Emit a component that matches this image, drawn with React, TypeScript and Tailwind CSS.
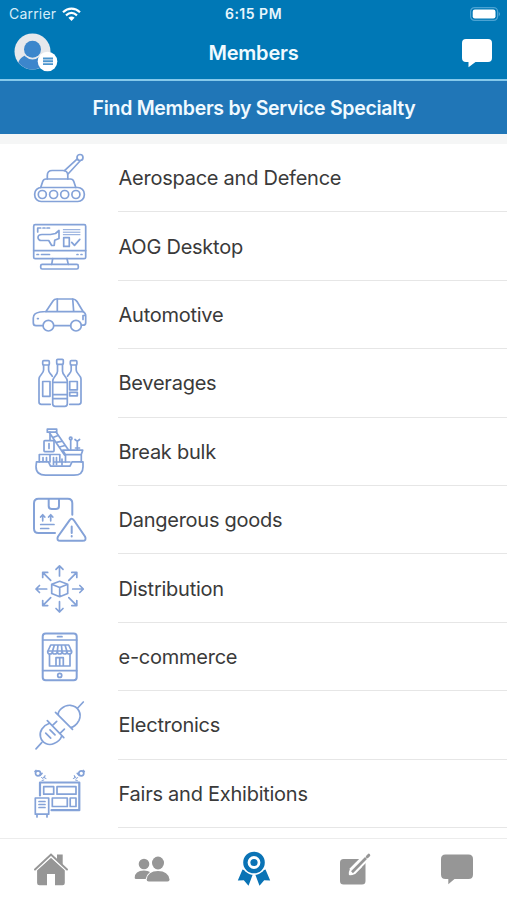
import type { ReactNode } from 'react';

const TankIcon = () => (
  <>
    <circle cx="50" cy="9.5" r="3" />
    <path d="M47.3 10.8 34.5 22.6M50 13 38 26" />
    <path d="M17.3 31v-3.5q0-5 5-5h10.5q5 0 5 5V31" />
    <path d="M10.7 39.5l2-6q.8-2.5 3.3-2.5h24.5q2.500 0 3.3 2.500l2 6" />
    <rect x="4.700" y="39.500" width="49.600" height="14" rx="6.500" />
    <circle cx="12.300" cy="46.500" r="4" />
    <circle cx="23.600" cy="46.500" r="4" />
    <circle cx="34.700" cy="46.500" r="4" />
    <circle cx="45.900" cy="46.500" r="4" />
  </>
);

const DesktopIcon = () => (
  <>
    <rect x="3.700" y="7.700" width="52" height="34" rx="1.500" />
    <path d="M3.700 33.600h52M22.700 41.700l-1 5.700M37 41.700l1.300 5.700" />
    <rect x="10.700" y="47.400" width="37.600" height="4.600" rx="1.500" />
    <path d="M7.700 15v-4h3M13 11h2M17 11h2.500M7 37.500h1.500M11.500 37.500h8M47 37.500h1M51 37.500h1" />
    <path d="M8 20.500c0-2 2-3 4-3h8.500l5-1 3.500-3v8l-4.300 1.800-.5 5.200h-2.500l-3-5H11c-1.500 0-3-1.500-3-3z" />
    <path d="M33.300 12.700H50M33.300 15.200H50M33.300 17.700H50" strokeWidth="1" />
    <path d="M33.700 20.700h5.600v8.700h-5.600zM41.700 25.400l2.800 3 5.300-6" />
  </>
);

const CarIcon = () => (
  <>
    <path d="M13 40.700H6q-2.700 0-2.700-3V33c0-4 2.500-5 6.700-6l6-.5 7-10.500q1.300-2 3.500-2H42q3.500 0 5 2.500l6 10q2.700 1.500 2.700 4.500v6.700q0 2.500-2.700 2.500h-1.500M24 40.700h16.500" />
    <path d="M16 26.700h37M27.300 14v12.700M42.700 14l1 12.700M55 30.500h-2v4M7.500 33.600h.8" />
    <circle cx="18.400" cy="40.700" r="5.300" />
    <circle cx="46" cy="40.700" r="5.300" />
  </>
);

const BottlesIcon = () => (
  <>
    <rect x="26.700" y="6.300" width="6.600" height="5" rx="1" />
    <path d="M27.500 11.300v7c0 4-4.800 5.500-4.800 10v22.500q0 2.500 2.500 2.500h9.600q2.500 0 2.500-2.500V28.300c0-4.500-4.800-6-4.800-10v-7M22.700 29.300h14.600M22.700 41.700h14.600M22.700 45.600h14.600" />
    <rect x="12.700" y="7.700" width="6.600" height="4.300" rx="1" />
    <path d="M13.600 12v5c0 4-4.600 5-4.600 9v23q0 2.300 2.300 2.300h9M18.600 12v5c0 3 2.500 4 3.700 6.300M12.700 28.500H20v14.800h-7.300z" />
    <rect x="40.300" y="7.700" width="6.600" height="4.300" rx="1" />
    <path d="M41.200 12v5c0 3-2.500 4-3.700 6.300M46.200 12v5c0 4 4.800 5 4.800 9v23q0 2.300-2.300 2.300h-9M39.700 28.500h7.600v8.300h-7.600zM39.700 39.300h7.600v3.500h-7.600z" />
  </>
);

const ShipIcon = () => (
  <>
    <path d="M6.500 39.900h12l2 4.300h19.500l2-4.300H53v5q0 8.300-9 8.300H15.500Q6 53.200 6 44.500z" />
    <path d="M32.700 28.200h20l-1.500 4.500H35.500zM35.500 32.700v7.200M51.300 32.700v7.200M17.300 7.200h9.400v3h-9.400z" />
    <path d="M19.300 10.500 34.500 33M26 10l12.500 18M23 15.500l5-2M26.300 20.300l5-1M29.500 25l5.500-1.500M20 10.200v8" />
    <rect x="14" y="18.700" width="10" height="10.900" rx=".8" />
    <path d="M19 21.500v5M9.300 39.900v-7.400h20.500v7.400M20 32.500v7.400M13 35.500v4M16.500 35.500v4M23.500 35.500v7M26.500 35.500v7M32 37v6M24 40h16" />
    <circle cx="40.700" cy="16.500" r="1.300" />
    <path d="M40.700 17.800v10M45 17.500l2.300 1.800 2.300-1.800M47.300 19v9M45.500 26h4" />
  </>
);

const DangerIcon = () => (
  <>
    <path d="M25 43.100H8.500Q4 43.100 4 38.600V13.300q0-4.500 4.500-4.500h29.300q4.500 0 4.500 4.500v11.500M18.700 8.800v7.300q0 3 3 3H26q3 0 3-3V8.800" strokeWidth="2" />
    <path d="M12.700 30.800v-6M10.600 27l2.100-2.300 2.100 2.300M20.700 30.800v-6M18.600 27l2.100-2.300 2.100 2.300M10.700 34.500H24M10.700 38.500h8" />
    <path d="M39.500 30.300q2.200-2.900 4.400 0L55 46.500q2 4.200-2.500 4.300H30.500q-4.500-.1-2.500-4.300zM41.700 36.500V43M41.700 46v.6" strokeWidth="2" />
  </>
);

const DistributionIcon = () => (
  <>
    <path d="M21.700 25.300l8-3 8 3v9.200l-8 3.200-8-3.200zM21.700 25.300l8 3.200 8-3.200M29.700 28.500v9.200" />
    <path d="M29.500 17V6.800M26 10.300l3.500-3.500 3.500 3.500M29.500 42.700V53M26 49.500l3.500 3.500 3.500-3.500M16.700 30H6M9.500 26.500 6 30l3.500 3.500M42.700 30h10.600M49.800 26.500l3.500 3.500-3.500 3.500" />
    <path d="M20.700 21.400l-8-8M12.700 18.400v-5h5M38.800 21.400l8-8M46.800 18.400v-5h-5M20.700 38.600l-8 8M12.700 41.600v5h5M38.800 38.600l8 8M46.800 41.600v5h-5" />
  </>
);

const ShopIcon = () => (
  <>
    <rect x="12.700" y="6.500" width="34" height="46.800" rx="3" strokeWidth="2" />
    <path d="M12.700 13h34M12.700 43.700h34M27.500 9.700H32" />
    <circle cx="29.700" cy="48.400" r="2" />
    <path d="M20.700 18h18l3 6.500q0 2.500-2.400 2.500T37 24.500q0 2.500-2.400 2.500t-2.500-2.500q0 2.500-2.400 2.500t-2.400-2.500q0 2.500-2.500 2.500t-2.400-2.500q0 2.500-2.400 2.500t-2.300-2.500zM22.400 24.500l2-6.500M27.300 24.500l.7-6.500M32.100 24.500l-.7-6.500M37 24.500 35 18M17.700 24h24" />
    <path d="M19.500 27v12h20.500V27M26 39v-8.300h7.300V39M29.700 31v8" />
  </>
);

const PlugIcon = () => (
  <>
    <path d="M25.500 17.300l17 17M28.500 20.300c-1.500-4 5-10.500 12-10 8 1 11.500 8.500 8.500 15-2 4-6 7.500-8.500 7M47.700 13l5.600-6" />
    <path d="M17.300 25.600l16.500 17M19 28.500c-6 2-10 8-8.500 13.500 1.500 6 8 9.200 13.500 6.500 3.500-1.500 6.500-4 7.500-7M11.700 47.700 6 53.800M22.300 30.600l4.400-4.200M30 38.300l4.400-4.200M15.700 38.200l5 5M20 34.800l5 5" />
  </>
);

const BoothIcon = () => (
  <>
    <path d="M10 31.500v-13h39.300v27.700H21.500" strokeWidth="2.200" />
    <path d="M13.700 22.700h10v7.500h-10zM27 22.700h19v7.500H27zM22.300 34h15v8.500h-15zM40.200 34H46v8.500h-5.800z" />
    <path d="M5.300 34h13.400v16.200H5.300zM7 50.200V53M17 50.200V53M9 37.500h6M9 40.500h6M9 43.500h6" />
    <circle cx="8" cy="9.300" r="2.500" />
    <circle cx="51.300" cy="9.300" r="2.500" />
    <path d="M5 7.500l1-1M10 11.300l2-2M54.300 7.500l-1-1M49.300 11.300l-2-2" />
    <path d="M11.500 13.500l1.500 1 1.200-2M15 11.500l-.5 2.500 1.500.5M12 16.500l1.800-.5M47.800 13.500l-1.500 1-1.200-2M44.300 11.500l.5 2.500-1.500.5M47.300 16.500l-1.800-.5" strokeWidth="1" />
  </>
);

const specialties: { name: string; icon: ReactNode }[] = [
  { name: 'Aerospace and Defence', icon: <TankIcon /> },
  { name: 'AOG Desktop', icon: <DesktopIcon /> },
  { name: 'Automotive', icon: <CarIcon /> },
  { name: 'Beverages', icon: <BottlesIcon /> },
  { name: 'Break bulk', icon: <ShipIcon /> },
  { name: 'Dangerous goods', icon: <DangerIcon /> },
  { name: 'Distribution', icon: <DistributionIcon /> },
  { name: 'e-commerce', icon: <ShopIcon /> },
  { name: 'Electronics', icon: <PlugIcon /> },
  { name: 'Fairs and Exhibitions', icon: <BoothIcon /> },
];

function StatusBar() {
  return (
    <div className="grid h-[27px] grid-cols-3 items-center pl-[9px] pr-[9px] text-[14px] leading-none">
      <div className="flex items-center gap-[6px] text-[#d5edf9]">
        <span className="tracking-[0.2px]">Carrier</span>
        <svg width="19" height="14" viewBox="0 0 19 14" fill="none" stroke="#fff" strokeWidth="2.200">
          <path d="M1 5.200c5-4.700 12-4.700 17 0M4 8.400c3.400-3 7.600-3 11 0" />
          <path d="M6.400 10.700q3.100-2.300 6.200 0L9.500 13.900z" fill="#fff" stroke="none" />
        </svg>
      </div>
      <span className="text-center font-semibold tracking-[0.500px] text-[#e8f6fd]">6:15 PM</span>
      <svg className="-mr-[3px] justify-self-end" width="31" height="14" viewBox="0 0 31 14">
        <rect x=".6" y=".6" width="27" height="12.800" rx="4" fill="none" stroke="#4ba3d3" strokeWidth="1.200" />
        <rect x="2.700" y="2.500" width="22.800" height="9" rx="2.200" fill="#fff" />
        <path d="M28.800 4.700q2 2.300 0 4.600z" fill="#66b2dc" />
      </svg>
    </div>
  );
}

function Header() {
  return (
    <header className="h-[81px] border-b-2 border-[#85c9eb] bg-[#0078b6] text-white">
      <StatusBar />
      <div className="flex h-[52px] items-center justify-between pl-[14px] pr-[14px]">
        <svg width="44" height="40" viewBox="0 0 44 40">
          <circle cx="18.500" cy="18.500" r="18" fill="#e6e8ec" />
          <path d="M4.300 29.500c2-5 5-6.700 9-7.500h9.500c3.500.5 8 2.500 9.500 8a18 18 0 0 1-28-.5z" fill="#3c86cc" />
          <circle cx="18.500" cy="16.500" r="10" fill="#e6e8ec" />
          <circle cx="18.500" cy="16.300" r="8.500" fill="#3c86cc" />
          <circle cx="33.500" cy="28.500" r="9.800" fill="#fff" />
          <path d="M29 25.500h10M29 28.300h10M29 31.100h10" stroke="#4b94cd" strokeWidth="1.900" />
        </svg>
        <h1 className="pr-[12px] text-[20px] font-semibold tracking-[-0.200px] text-[#f1faff]">Members</h1>
        <svg width="32" height="30" viewBox="0 0 32 30" fill="#fff">
          <path d="M5 1h22q4 0 4 4v15q0 4-4 4H14.500l-7 5.200V24H5q-4 0-4-4V5q0-4 4-4z" />
        </svg>
      </div>
    </header>
  );
}

function TabBar() {
  return (
    <nav className="grid h-[62px] grid-cols-5 border-t border-[#ececec] bg-white text-[#969696]">
      <div className="flex justify-center pt-[13px]">
        <svg width="36" height="34" viewBox="0 0 36 34" fill="currentColor">
          <path d="M18 5.500 31.800 18v13q0 2.300-2.300 2.300H22V22h-8v11.300H6.400q-2.300 0-2.300-2.300V18z" />
          <path d="M2 17 18 2.500 34 17" fill="none" stroke="#fff" strokeWidth="5" />
          <path d="M24 2.500h5.700v11L24 8z" />
          <path d="M2 17.500 18 2.500l16 15" fill="none" stroke="currentColor" strokeWidth="2" strokeLinecap="round" />
        </svg>
      </div>
      <div className="flex justify-center pt-[16px]">
        <svg width="36" height="30" viewBox="0 0 36 30" fill="currentColor">
          <circle cx="10" cy="9" r="5.300" />
          <path d="M.7 23q0-7.500 9.300-7.500 4 0 6 1.500-3.500 2.500-4.300 7H2Q.7 24 .7 23z" />
          <ellipse cx="24" cy="8" rx="6" ry="6.400" />
          <path d="M12.700 24.500q1-8.500 11.300-8.500t11.500 8.500q.2 2-2 2H14.700q-2.200 0-2-2z" />
        </svg>
      </div>
      <div className="flex justify-center pl-px pt-[12px] text-[#0a73b5]">
        <svg width="34" height="36" viewBox="0 0 34 36" fill="currentColor">
          <path d="M5.500 18.500.8 29.500l6-.3 4.700 5.500L16.300 22zM28.500 18.500l4.700 11-6-.3-4.700 5.500L17.700 22z" />
          <circle cx="17" cy="11.500" r="12.500" fill="#fff" />
          <circle cx="17" cy="11.500" r="8.600" fill="none" stroke="currentColor" strokeWidth="4.400" />
          <circle cx="17" cy="11.500" r="3.600" />
        </svg>
      </div>
      <div className="flex justify-center pt-[13px]">
        <svg width="32" height="34" viewBox="0 0 32 34" fill="currentColor">
          <rect x="1" y="7" width="25.500" height="25.500" rx="3.500" />
          <path d="M26.500 6 13 19.500" fill="none" stroke="#fff" strokeWidth="7.500" />
          <path d="M17.500 10 11 17q-1.500 3-1.200 5.300 0 1 1 1 2.200.2 5.200-1.300L23 15z" fill="#fff" />
          <path d="M27 6 13 20.300" fill="none" stroke="currentColor" strokeWidth="2.700" />
          <path d="M28.300 4.700 29.800 3.200" stroke="currentColor" strokeWidth="3" strokeLinecap="round" />
        </svg>
      </div>
      <div className="flex justify-center pl-[2px] pt-[14px]">
        <svg width="34" height="32" viewBox="0 0 34 32" fill="currentColor">
          <path d="M5.500 1.500h23q4.500 0 4.500 4.500v15.500q0 4.500-4.500 4.500H14.500L8.300 31.300V26H5.500Q1 26 1 21.500V6q0-4.500 4.500-4.500z" />
        </svg>
      </div>
    </nav>
  );
}

function App() {
  return (
    <div className="flex h-[900px] w-[507px] flex-col overflow-hidden bg-white font-[Inter,'Liberation_Sans',sans-serif]">
      <Header />
      <div className="flex h-[53px] shrink-0 items-center justify-center bg-[#2076b7] pl-px pt-[2px] text-[19.500px] font-semibold tracking-[-0.300px] text-[#f1faff]">
        Find Members by Service Specialty
      </div>
      <div className="h-[10px] shrink-0 bg-[#f5f6f6]" />
      <ul className="min-h-0 flex-1">
        {specialties.map(({ name, icon }) => (
          <li key={name} className="flex h-[68.400px] items-center pl-[30px]">
            <svg
              className="shrink-0"
              width="60"
              height="60"
              viewBox="0 0 60 60"
              fill="none"
              stroke="#84a2d8"
              strokeWidth="1.700"
              strokeLinecap="round"
              strokeLinejoin="round"
            >
              {icon}
            </svg>
            <div className="ml-[28px] flex h-full flex-1 items-center border-b border-[#e6e6e6] pl-[0.500px] pt-px text-[20px] tracking-[-0.250px] text-[#3a3a3a]">
              {name}
            </div>
          </li>
        ))}
      </ul>
      <TabBar />
    </div>
  );
}

export default App;
